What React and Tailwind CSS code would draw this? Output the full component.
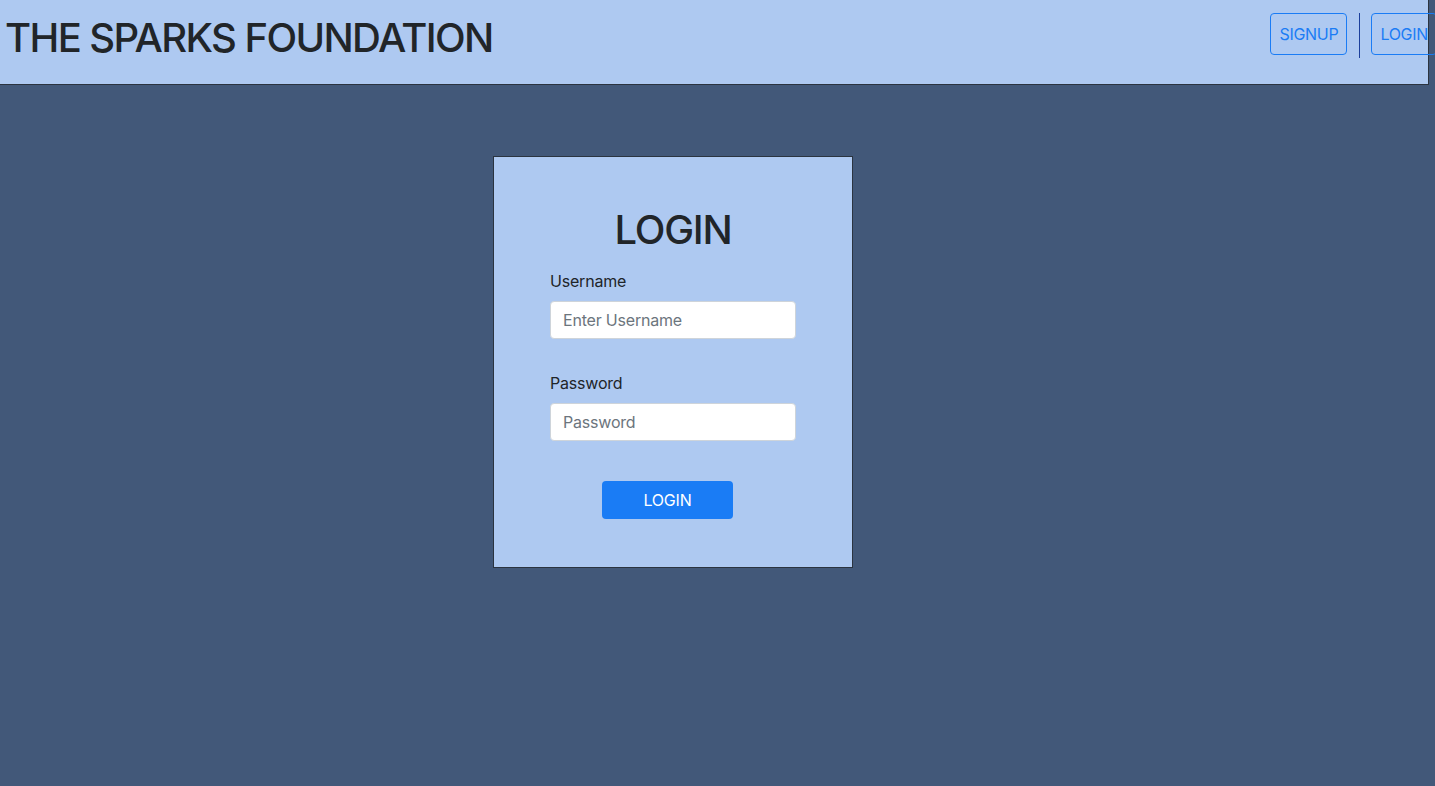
// Login page

import React from "react";

function Header() {
  return (
    <div className="w-[1429px] h-[85px] flex items-start justify-between bg-[#aec9f1] border-r border-b border-[#2b3440]">
      <h1 className="pl-[5px] pt-[14px] text-[40px] leading-[48px] font-medium text-[#212529] tracking-[-1.6px]">
        THE SPARKS FOUNDATION
      </h1>
      <div className="flex items-start mr-[-9px] pt-[13px]">
        <button className="h-[42px] px-[8px] border border-[#1a7cf5] rounded-[4px] text-[#1a7cf5] text-[16px] tracking-[-0.3px]">
          SIGNUP
        </button>
        <div className="w-[1px] h-[45px] bg-[#1c3f9c] ml-[12px] mr-[11px]" />
        <button className="h-[42px] px-[8px] border border-[#1a7cf5] rounded-[4px] text-[#1a7cf5] text-[16px] tracking-[-0.3px]">
          LOGIN
        </button>
      </div>
    </div>
  );
}

function LoginCard() {
  return (
    <div className="w-[360px] h-[412px] ml-[493px] mt-[71px] bg-[#aec9f1] border border-[#2b3440] pt-[49px] px-[56px]">
      <h2 className="text-center text-[40px] leading-[48px] font-medium tracking-[-1.2px] text-[#212529]">LOGIN</h2>
      <div className="mt-[15px]">
        <label className="block text-[16px] leading-[24px] tracking-[-0.2px] text-[#212529]">Username</label>
        <input
          type="text"
          placeholder="Enter Username"
          className="mt-[8px] w-[246px] h-[38px] px-[12px] bg-white border border-[#ced4da] rounded-[4px] text-[16px] tracking-[-0.2px] placeholder:text-[#6c757d] outline-none"
        />
      </div>
      <div className="mt-[32px]">
        <label className="block text-[16px] leading-[24px] tracking-[-0.2px] text-[#212529]">Password</label>
        <input
          type="password"
          placeholder="Password"
          className="mt-[8px] w-[246px] h-[38px] px-[12px] bg-white border border-[#ced4da] rounded-[4px] text-[16px] tracking-[-0.2px] placeholder:text-[#6c757d] outline-none"
        />
      </div>
      <button className="block mt-[40px] ml-[52px] w-[131px] h-[38px] bg-[#1a7cf5] rounded-[4px] text-white text-[16px] tracking-[-0.2px]">
        LOGIN
      </button>
    </div>
  );
}

export default function App() {
  return (
    <div
      className="w-[1435px] h-[786px] bg-[#425879] overflow-hidden"
      style={{ fontFamily: "Inter, 'Liberation Sans', sans-serif" }}
    >
      <Header />
      <LoginCard />
    </div>
  );
}
